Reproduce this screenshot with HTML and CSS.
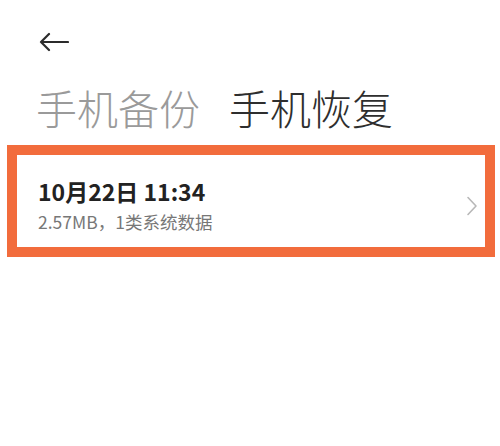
FILE: index.html
```html
<!DOCTYPE html>
<html lang="zh-CN">
<head>
<meta charset="utf-8">
<link rel="stylesheet" href="styles.css">
</head>
<body>
<div class="page">
  <div class="topbar">
    <svg class="back" width="30" height="20" viewBox="0 0 30 20"><path d="M2 10H29M10 2L2 10L10 18" fill="none" stroke="#2b2b2b" stroke-width="2.2" stroke-linecap="round" stroke-linejoin="round"/></svg>
  </div>
  <div class="tabs">
    <span class="tab">手机备份</span>
    <span class="tab active">手机恢复</span>
  </div>
  <div class="frame">
    <div class="item">
      <div class="texts">
        <div class="title">10月22日 11:34</div>
        <div class="sub">2.57MB，1类系统数据</div>
      </div>
      <svg class="chev" width="12" height="20" viewBox="0 0 12 20"><path d="M2 1.5L10 10L2 18.5" fill="none" stroke="#b8b8b8" stroke-width="1.6" stroke-linecap="round" stroke-linejoin="round"/></svg>
    </div>
  </div>
</div>
</body>
</html>
```
FILE: styles.css
```css
* { box-sizing: border-box; }
html, body { margin: 0; padding: 0; background: #fff; }
body { font-family: "Noto Sans CJK SC", "Noto Sans", sans-serif; width: 500px; height: 446px; overflow: hidden; }
.page { display: flex; flex-direction: column; }
.topbar { height: 82px; padding: 32px 0 0 39px; }
.back { display: block; }
.tabs { display: flex; gap: 29px; padding-left: 36px; height: 63px; align-items: flex-start; }
.tab { font-size: 41px; line-height: 50px; font-weight: 300; color: #9a9a9a; }
.tab.active { color: #2e2e2e; }
.frame { margin: 0 5px 0 7px; border: 10px solid #f26c3c; height: 112px; }
.item { display: flex; align-items: center; height: 100%; padding: 0 7px 0 21px; }
.texts { flex: 1; display: flex; flex-direction: column; gap: 6px; margin-top: 8px; }
.title { font-size: 23px; line-height: 28px; font-weight: 700; color: #222; }
.sub { font-size: 17.5px; line-height: 22px; color: #777; }
.chev { display: block; margin-top: 10px; }
```
